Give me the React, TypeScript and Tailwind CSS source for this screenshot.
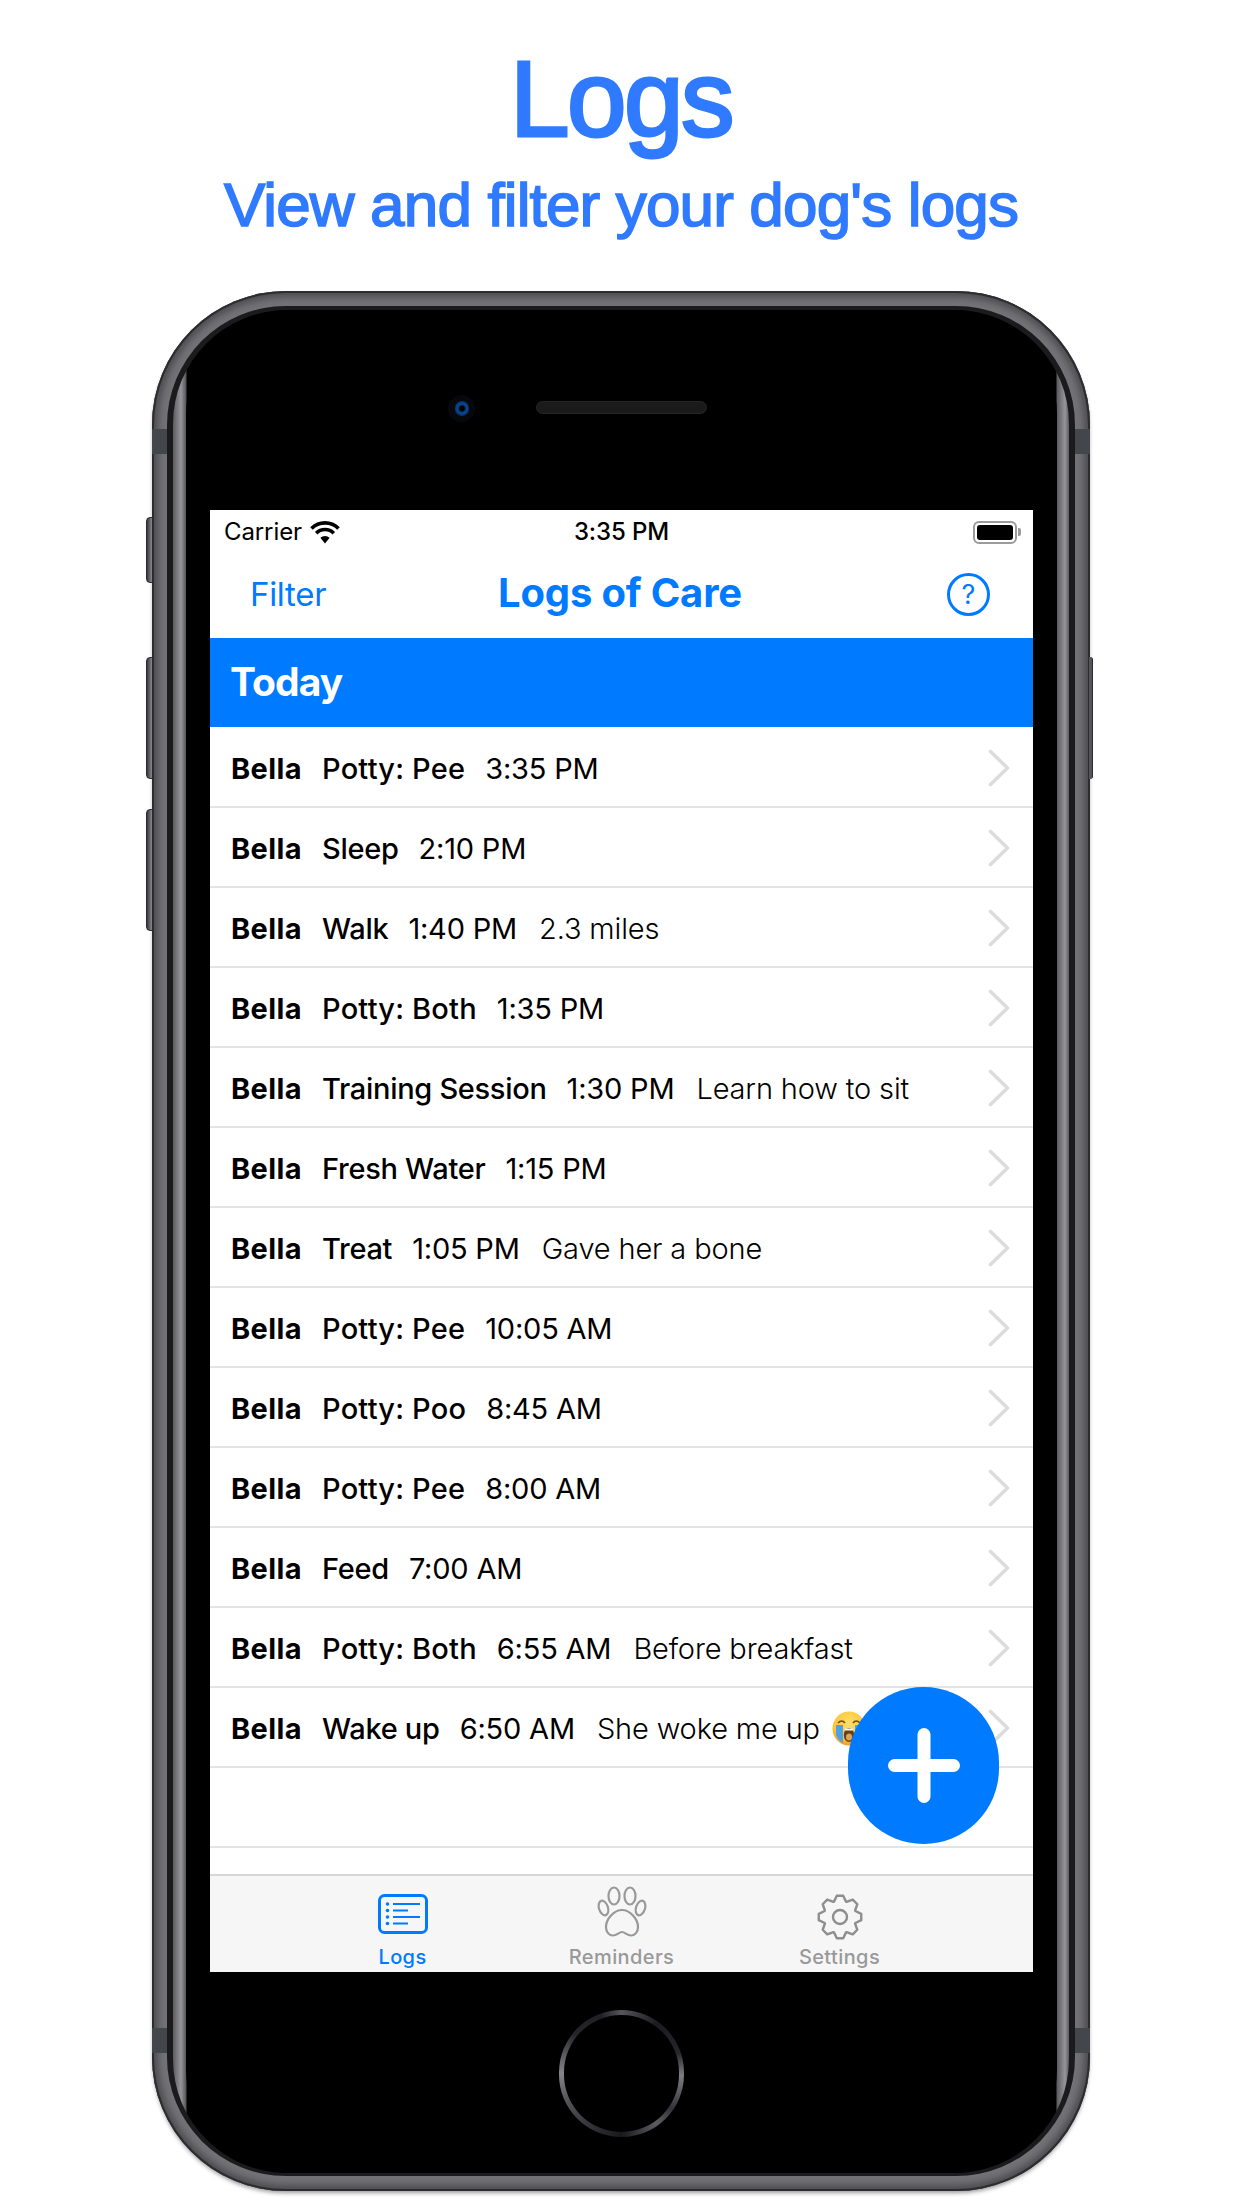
import React from "react";

const rows: string[][] = [
  ["Potty: Pee", "3:35 PM"],
  ["Sleep", "2:10 PM"],
  ["Walk", "1:40 PM", "2.3 miles"],
  ["Potty: Both", "1:35 PM"],
  ["Training Session", "1:30 PM", "Learn how to sit"],
  ["Fresh Water", "1:15 PM"],
  ["Treat", "1:05 PM", "Gave her a bone"],
  ["Potty: Pee", "10:05 AM"],
  ["Potty: Poo", "8:45 AM"],
  ["Potty: Pee", "8:00 AM"],
  ["Feed", "7:00 AM"],
  ["Potty: Both", "6:55 AM", "Before breakfast"],
  ["Wake up", "6:50 AM", "She woke me up"],
];

function gearPath(cx: number, cy: number) {
  const pts: string[] = [];
  const teeth = 8;
  for (let i = 0; i < teeth; i++) {
    const a = (i / teeth) * Math.PI * 2 - Math.PI / 2;
    const s = (Math.PI * 2) / teeth;
    const offs: [number, number][] = [
      [-0.5, 16.5],
      [-0.2, 21.5],
      [0.2, 21.5],
      [0.5, 16.5],
    ];
    offs.forEach(([o, r]) => {
      const t = a + o * s * 0.95;
      pts.push(`${(cx + r * Math.cos(t)).toFixed(2)} ${(cy + r * Math.sin(t)).toFixed(2)}`);
    });
  }
  return "M" + pts.join("L") + "Z";
}

function Wifi() {
  return (
    <svg width="30" height="24" viewBox="0 0 30 24" fill="none" stroke="#000" strokeWidth="3.6">
      <path d="M1.5 8.5 A19 19 0 0 1 28.5 8.5" />
      <path d="M6.2 13.2 A12.4 12.4 0 0 1 23.8 13.2" />
      <path d="M15 23.5 L10.4 17.8 A6.6 6.6 0 0 1 19.6 17.8 Z" fill="#000" stroke="none" />
    </svg>
  );
}

function Battery() {
  return (
    <div className="flex items-center gap-[1px]">
      <div className="w-[44px] h-[23px] rounded-[6px] border-2 border-[#9b9b9b] p-[2px]">
        <div className="w-full h-full bg-black rounded-[3px]" />
      </div>
      <div className="w-[3px] h-[8px] bg-[#9b9b9b] rounded-r-[2px]" />
    </div>
  );
}

function Chevron() {
  return (
    <svg width="22" height="38" viewBox="0 0 22 38" fill="none" stroke="#dcdcdc" strokeWidth="3.6" strokeLinecap="round" strokeLinejoin="round" className="mt-[1px]">
      <path d="M2.5 2.5 L19.5 19 L2.5 35.5" />
    </svg>
  );
}

function CryEmoji() {
  return (
    <svg width="34" height="35" viewBox="0 0 34 35" className="shrink-0">
      <defs>
        <radialGradient id="face" cx="50%" cy="35%" r="65%">
          <stop offset="0%" stopColor="#ffe06a" />
          <stop offset="70%" stopColor="#fcc63a" />
          <stop offset="100%" stopColor="#f39a1c" />
        </radialGradient>
      </defs>
      <ellipse cx="17" cy="17.5" rx="16.5" ry="17" fill="url(#face)" />
      <path d="M6 12 Q10 8 13 12" stroke="#7a4a12" strokeWidth="1.6" fill="none" />
      <path d="M21 12 Q24 8 28 12" stroke="#7a4a12" strokeWidth="1.6" fill="none" />
      <path d="M4 14 H11 L11 32 Q6 29 4 24 Z" fill="#4aa3ea" />
      <path d="M23 14 H30 L30 24 Q28 29 23 32 Z" fill="#4aa3ea" />
      <ellipse cx="17" cy="24" rx="5.2" ry="7" fill="#6b3d12" />
      <ellipse cx="17" cy="26" rx="3" ry="3.6" fill="#e0a458" />
      <path d="M13 18.5 H21" stroke="#fff" strokeWidth="2" />
    </svg>
  );
}

function Row({ cols }: { cols: string[] }) {
  const last = cols[0] === "Wake up";
  const potty = cols[0].startsWith("Potty");
  return (
    <div className="h-[80px] shrink-0 border-b-2 border-[#e4e4e4] flex items-center justify-between pl-[21px] pr-[23px]">
      <div className="flex items-center gap-[20px] text-[29px] text-black whitespace-nowrap pt-[3px]">
        <span className="font-bold tracking-[0.4px]">Bella</span>
        <span className={potty ? "font-medium tracking-[0.2px]" : "font-medium tracking-[-0.3px]"}>{cols[0]}</span>
        <span className="font-normal tracking-[-0.2px]">{cols[1]}</span>
        {cols[2] && <span className="font-light tracking-[-0.15px] ml-[2px]">{cols[2]}</span>}
        {last && <span className="-ml-[8px]"><CryEmoji /></span>}
      </div>
      <Chevron />
    </div>
  );
}

function Antenna({ className }: { className: string }) {
  return <div className={`absolute w-[15px] h-[25px] bg-[#43464b] ${className}`} />;
}

function SideButton({ className }: { className: string }) {
  return <div className={`absolute w-[7px] bg-gradient-to-r from-[#3a3a3e] to-[#8a8a90] border border-[#2a2a2c] ${className}`} />;
}

export default function App() {
  return (
    <div
      className="w-[1242px] h-[2208px] bg-white overflow-hidden flex flex-col items-center"
      style={{ fontFamily: "Inter, 'Noto Sans', sans-serif" }}
    >
      <div className="h-[291px] shrink-0 flex flex-col items-center text-[#2f7aff] font-['Liberation_Sans',Arial,sans-serif]">
        <h1 className="text-[107px] leading-[104px] mt-[47px] font-normal tracking-[-2.5px] [-webkit-text-stroke:3px_#2f7aff]">Logs</h1>
        <p className="text-[62px] leading-[72px] mt-[18px] tracking-[-0.85px] [-webkit-text-stroke:1.6px_#2f7aff]">View and filter your dog's logs</p>
      </div>

      <div className="relative w-[938px] h-[1900px] shrink-0 rounded-[134px] bg-[#727277] p-[15px] shadow-[inset_0_0_0_2px_#2d2d30,inset_0_0_7px_6px_#4c4c50,0_3px_4px_-1px_#00000066]">
        <SideButton className="-left-[6px] top-[226px] h-[66px] rounded-l-[4px]" />
        <SideButton className="-left-[6px] top-[366px] h-[122px] rounded-l-[4px]" />
        <SideButton className="-left-[6px] top-[518px] h-[122px] rounded-l-[4px]" />
        <div className="absolute -right-[3px] top-[366px] h-[122px] w-[4px] bg-[#55555a] border-r border-[#2a2a2c] rounded-r-[3px]" />
        <Antenna className="left-0 top-[138px]" />
        <Antenna className="right-0 top-[138px]" />
        <Antenna className="left-0 top-[1737px]" />
        <Antenna className="right-0 top-[1737px]" />

        <div className="relative w-full h-full rounded-[119px] bg-[#1b1b1d] pl-[6px] pr-[6px] pt-[4px] pb-[3px]">
          <div className="w-full h-full rounded-[114px] pl-[13px] pr-[12px] bg-[linear-gradient(to_right,#5c5c60,#96969a_8px,#55555a_13px,#000_14px,#000_calc(100%-13px),#5c5c60_calc(100%-12px),#96969a_calc(100%-4px),#5c5c60)]">
            <div className="w-full h-full bg-black rounded-[104px] flex flex-col items-center">
              <div className="relative h-[200px] shrink-0 flex items-center justify-center pb-[6px]">
                <div className="relative w-[171px] h-[13px] rounded-full bg-[#1a1a1a] border border-[#262626]">
                  <div className="absolute -left-[89px] -top-[7px] w-[27px] h-[27px] rounded-full bg-[#07080c] flex items-center justify-center">
                    <div className="w-[14px] h-[15px] rounded-full bg-[radial-gradient(circle,#000_22%,#0b4a9a_42%,#052044_90%)]" />
                  </div>
                </div>
              </div>

              <div className="relative w-[823px] h-[1462px] shrink-0 bg-white flex flex-col overflow-hidden">
                <div className="h-[46px] shrink-0 relative flex items-center justify-between pl-[14px] pr-[12px] text-[24px] text-black -translate-y-[1px]">
                  <div className="flex items-center gap-[8px]">
                    <span className="tracking-[-0.1px]">Carrier</span>
                    <Wifi />
                  </div>
                  <span className="absolute left-0 right-0 text-center font-medium tracking-[-0.1px]">3:35 PM</span>
                  <Battery />
                </div>

                <div className="h-[82px] shrink-0 grid grid-cols-[1fr_auto_1fr] items-center pl-[40px] pr-[43px] pb-[6px]">
                  <span className="text-[33px] text-[#007aff] tracking-[-0.3px] mt-[1px]">Filter</span>
                  <span className="text-[40px] font-bold text-[#007aff] tracking-[-0.2px] -mt-[3px]">Logs of Care</span>
                  <div className="justify-self-end w-[43px] h-[43px] rounded-full border-[3px] border-[#007aff] flex items-center justify-center text-[#007aff] text-[27px] leading-none">
                    ?
                  </div>
                </div>

                <div className="h-[89px] shrink-0 bg-[#007aff] flex items-center pl-[20px] text-white text-[39px] font-bold tracking-[-0.9px]">
                  Today
                </div>

                <div className="flex-1 flex flex-col overflow-hidden pt-[1px]">
                  {rows.map((r, i) => (
                    <Row key={i} cols={r} />
                  ))}
                  <div className="h-[80px] shrink-0 border-b-2 border-[#e4e4e4]" />
                </div>

                <div className="h-[98px] shrink-0 bg-[#f6f6f6] border-t-2 border-[#d6d6d6] flex justify-center text-[20px] font-medium tracking-[0.4px] text-[#999999]">
                  <div className="w-[218px] relative flex flex-col items-center justify-end text-[#007aff] -translate-x-[1px]">
                    <svg width="50" height="40" viewBox="0 0 50 40" fill="none" stroke="#007aff" className="mb-[8px]">
                      <rect x="1.5" y="1.5" width="47" height="37" rx="5" strokeWidth="3" />
                      {[9.5, 16, 22.5, 29].map((y) => (
                        <circle key={y} cx="9.5" cy={y + 0.5} r="1.8" fill="#007aff" stroke="none" />
                      ))}
                      <path d="M15 10H42M15 16.500H30M15 23H42M15 29.500H30" strokeWidth="2" />
                    </svg>
                    <span>Logs</span>
                  </div>
                  <div className="w-[218px] flex flex-col items-center justify-end">
                    <svg width="50" height="51" viewBox="0 0 50 51" fill="none" stroke="#999999" strokeWidth="2.200" className="mb-[5px]">
                      <ellipse cx="17" cy="10" rx="5.500" ry="8.500" />
                      <ellipse cx="33" cy="10" rx="5.500" ry="8.500" />
                      <ellipse cx="6.500" cy="22" rx="4.500" ry="7.500" transform="rotate(-18 6.500 22)" />
                      <ellipse cx="43.500" cy="22" rx="4.500" ry="7.500" transform="rotate(18 43.500 22)" />
                      <path d="M25 24C17 24 9 33 9 41C9 46 12 49.500 16 49.500C20 49.500 22 46 25 46C28 46 30 49.500 34 49.500C38 49.500 41 46 41 41C41 33 33 24 25 24Z" />
                    </svg>
                    <span>Reminders</span>
                  </div>
                  <div className="w-[218px] flex flex-col items-center justify-end">
                    <svg width="48" height="48" viewBox="0 0 48 48" fill="none" stroke="#8e8e8e" strokeWidth="2.400" strokeLinejoin="round" className="mb-[1px]">
                      <path d={gearPath(24, 24)} />
                      <circle cx="24" cy="24" r="7" />
                    </svg>
                    <span>Settings</span>
                  </div>
                </div>

                <button className="absolute right-[34px] bottom-[128px] w-[151px] h-[157px] rounded-full bg-[#007aff] flex items-center justify-center">
                  <svg width="72" height="75" viewBox="0 0 72 75" fill="none" stroke="#fff" strokeWidth="13" strokeLinecap="round">
                    <path d="M36 6.500V68.500M6.500 37.500H65.500" />
                  </svg>
                </button>
              </div>

              <div className="flex-1 w-full flex items-center justify-center pt-[2px]">
                <div className="w-[125px] h-[127px] rounded-full p-[5px] bg-[conic-gradient(#55555a_0deg,#1c1c20_35deg,#26262a_70deg,#7c7c82_92deg,#333338_125deg,#5c5c62_145deg,#18181c_180deg,#36363c_215deg,#55555a_245deg,#84848a_270deg,#26262a_310deg,#202024_340deg,#55555a_360deg)]">
                  <div className="w-full h-full rounded-full bg-black" />
                </div>
              </div>
            </div>
          </div>
        </div>
      </div>
    </div>
  );
}
